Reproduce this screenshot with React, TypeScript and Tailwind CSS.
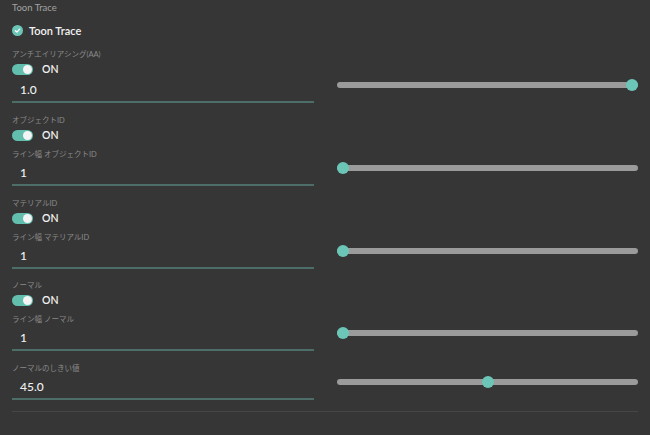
import React from "react";

const FONT = { fontFamily: 'Lato, "Noto Sans CJK JP", sans-serif' };

function Label({ text, mt }: { text: string; mt?: string }) {
  return (
    <div className={`h-[14px] flex items-center text-[7.5px] text-[#8a8a8a] leading-none ${mt ?? ""}`}>
      {text}
    </div>
  );
}

function Toggle() {
  return (
    <div className="h-[14px] flex items-center">
      <div className="w-[21px] h-[11px] rounded-full bg-[#62bfae] flex items-center justify-end pr-[1px]">
        <div className="w-[9px] h-[9px] rounded-full bg-[#f4f4f4]" />
      </div>
      <span className="ml-[9px] text-[10.5px] font-semibold text-[#f2f2f2] leading-none">ON</span>
    </div>
  );
}

function Slider({ value, min, max }: { value: number; min: number; max: number }) {
  const pct = (value - min) / (max - min);
  return (
    <div className="relative h-[12px] w-full flex items-center">
      <div className="h-[6px] w-full rounded-full bg-[#9b9b9b]" />
      <div
        className="absolute top-0 h-[12px] w-[12px] rounded-full bg-[#6cc6b8]"
        style={{ left: `calc(${pct} * (100% - 12px))` }}
      />
    </div>
  );
}

function InputRow({
  label,
  value,
  num,
  min,
  max,
  mt,
}: {
  label?: string;
  value: string;
  num: number;
  min: number;
  max: number;
  mt: string;
}) {
  return (
    <div className={`grid grid-cols-[302px_1fr] gap-[23px] ${mt}`}>
      <div className="flex flex-col">
        {label && <Label text={label} />}
        <div className="h-[22px] flex items-center pl-2 text-[12px] text-[#f0f0f0] font-medium leading-none">
          {value}
        </div>
        <div className="h-[2px] bg-[#4d6e68]" />
      </div>
      <div className="flex items-end pb-[12px]">
        <Slider value={num} min={min} max={max} />
      </div>
    </div>
  );
}

export default function App() {
  return (
    <div className="w-[650px] h-[435px] bg-[#363636] px-3 overflow-hidden" style={FONT}>
      <div className="pt-[1px] h-[15px] flex items-center text-[9.5px] text-[#a3a3a3] leading-none">
        Toon Trace
      </div>
      <div className="h-[30px] flex items-center">
        <div className="w-[11px] h-[11px] rounded-full bg-[#6cc6b8] flex items-center justify-center">
          <svg width="7" height="7" viewBox="0 0 8 8">
            <path d="M1.6 4.2 L3.3 5.8 L6.4 2.4" fill="none" stroke="#ffffff" strokeWidth="1.5" strokeLinecap="round" strokeLinejoin="round" />
          </svg>
        </div>
        <span className="ml-[6px] text-[11px] font-semibold text-[#f2f2f2] leading-none">Toon Trace</span>
      </div>

      <Label text="アンチエイリアシング(AA)" mt="mt-[3px]" />
      <Toggle />
      <InputRow value="1.0" num={1} min={0} max={1} mt="mt-[3px]" />

      <Label text="オブジェクトID" mt="mt-[11px]" />
      <Toggle />
      <InputRow label="ライン幅 オブジェクトID" value="1" num={1} min={1} max={10} mt="mt-[6px]" />

      <Label text="マテリアルID" mt="mt-[11px]" />
      <Toggle />
      <InputRow label="ライン幅 マテリアルID" value="1" num={1} min={1} max={10} mt="mt-[6px]" />

      <Label text="ノーマル" mt="mt-[10px]" />
      <Toggle />
      <InputRow label="ライン幅 ノーマル" value="1" num={1} min={1} max={10} mt="mt-[6px]" />

      <InputRow label="ノーマルのしきい値" value="45.0" num={45} min={0} max={90} mt="mt-[11px]" />

      <div className="mt-[11px] h-[1px] bg-[#464646]" />
    </div>
  );
}
